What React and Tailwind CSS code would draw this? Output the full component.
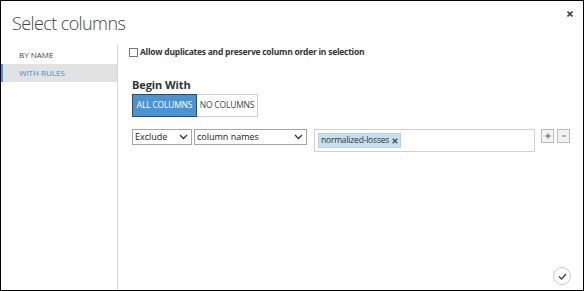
import React from "react";

function Chevron() {
  return (
    <svg width="9" height="6" viewBox="0 0 9 6" className="shrink-0">
      <path d="M1 1 L4.5 4.5 L8 1" fill="none" stroke="#333" strokeWidth="1.3" />
    </svg>
  );
}

export default function App() {
  return (
    <div
      className="relative w-[584px] h-[291px] border border-black bg-white flex flex-col overflow-hidden"
      style={{ fontFamily: '"Open Sans", "Noto Sans", sans-serif' }}
    >
      <div className="h-[44px] shrink-0 pl-[11px] pt-[9px] text-[18px] font-light text-[#444] leading-[26px] tracking-[-0.6px]">
        Select columns
      </div>
      <button className="absolute top-[9px] right-[9px] w-[8px] h-[8px] flex items-center justify-center text-[#555]">
        <svg width="6" height="6" viewBox="0 0 6 6">
          <path d="M0.5 0.5 L5.5 5.5 M5.5 0.5 L0.5 5.5" stroke="#444" strokeWidth="1.6" />
        </svg>
      </button>
      <div className="flex flex-1 min-h-0">
        <div className="w-[117px] shrink-0 border-r border-[#d6d6d6] flex flex-col">
          <div className="h-[19px] flex items-center pl-[18px] text-[8px] text-[#444] uppercase">
            By Name
          </div>
          <div className="h-[18px] flex items-center pl-[16px] text-[8px] text-[#3e8bd0] uppercase bg-[#e2e2e2] border-l-2 border-[#4a94d4]">
            With Rules
          </div>
        </div>
        <div className="flex-1 flex flex-col pl-[11px] pt-[3px] relative">
          <label className="flex items-center gap-[2px] h-[9px] text-[8.5px] font-bold text-[#333]">
            <span className="w-[9px] h-[9px] border border-[#777] bg-white shrink-0" />
            <span className="tracking-[-0.25px]">Allow duplicates and preserve column order in selection</span>
          </label>
          <div className="pl-[3px] mt-[21px] text-[11px] font-bold text-[#333] leading-[14px] tracking-[-0.1px]">
            Begin With
          </div>
          <div className="pl-[3px] mt-[2px] flex">
            <button className="w-[65px] h-[23px] bg-[#4b93d3] border border-[#2f4a62] text-white text-[8.5px] uppercase flex items-center justify-center tracking-[-0.2px]">
              All Columns
            </button>
            <button className="w-[61px] h-[23px] bg-white border border-l-0 border-[#ccc] text-[#444] text-[8.5px] uppercase flex items-center justify-center tracking-[-0.2px]">
              No Columns
            </button>
          </div>
          <div className="pl-[3px] mt-[12px] flex items-start">
            <div className="w-[60px] h-[16px] border border-[#a6a6a6] flex items-center justify-between pl-[2px] pr-[3px] text-[9px] text-[#222]">
              <span>Exclude</span>
              <Chevron />
            </div>
            <div className="ml-[2px] w-[113px] h-[16px] border border-[#a6a6a6] flex items-center justify-between pl-[2px] pr-[3px] text-[9px] text-[#222]">
              <span>column names</span>
              <Chevron />
            </div>
            <div className="ml-[7px] w-[221px] h-[23px] border border-[#d0d0d0] flex items-center pl-[3px]">
              <span className="h-[15px] px-[2px] bg-[#c7dff0] border border-[#b3d2e8] text-[8.5px] text-[#333] flex items-center gap-[3px] tracking-[-0.2px]">
                normalized-losses
                <svg width="6" height="6" viewBox="0 0 6 6">
                  <path d="M0.7 0.7 L5.3 5.3 M5.3 0.7 L0.7 5.3" stroke="#555" strokeWidth="1.5" />
                </svg>
              </span>
            </div>
            <button className="ml-[6px] w-[13px] h-[14px] border border-[#bbb] bg-[#f2f2f2] flex items-center justify-center">
              <svg width="6" height="6" viewBox="0 0 6 6">
                <path d="M3 0.5 V5.5 M0.5 3 H5.5" stroke="#777" strokeWidth="1.3" />
              </svg>
            </button>
            <button className="ml-[3px] w-[13px] h-[14px] border border-[#bbb] bg-[#f2f2f2] flex items-center justify-center">
              <svg width="6" height="6" viewBox="0 0 6 6">
                <path d="M1 3 H5" stroke="#888" strokeWidth="1.2" />
              </svg>
            </button>
          </div>
          <div className="absolute right-[12px] bottom-[5px] w-[18px] h-[18px] rounded-full border border-[#c8c8c8] flex items-center justify-center">
            <svg width="9" height="7" viewBox="0 0 9 7">
              <path d="M1 3.5 L3.5 6 L8 1" fill="none" stroke="#444" strokeWidth="1.4" />
            </svg>
          </div>
        </div>
      </div>
    </div>
  );
}
